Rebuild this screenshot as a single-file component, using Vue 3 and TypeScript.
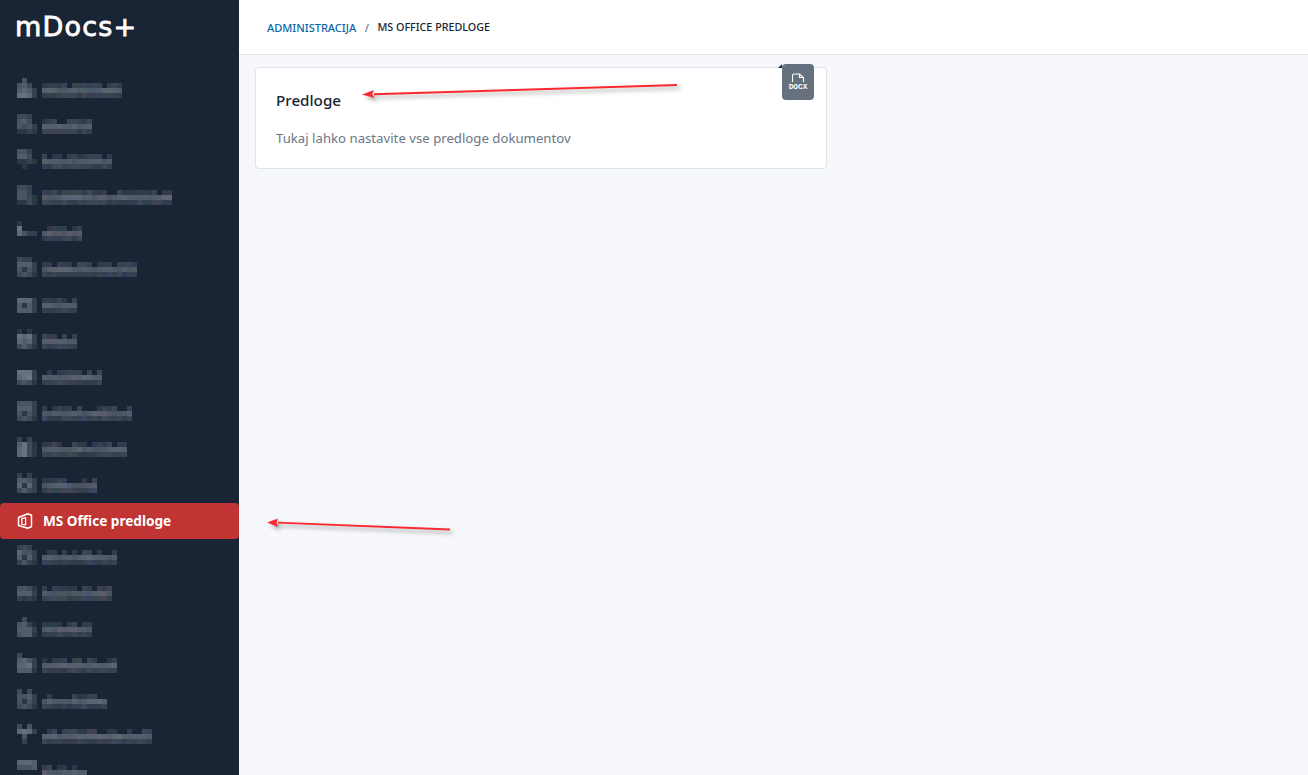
<script setup lang="ts">
interface Cell { x: number; y: number; fill: string }
interface Row { label?: string; cells?: Cell[] }

function rng(seed: number): () => number {
  let s = seed * 9301 + 49297;
  return () => {
    s = (s * 9301 + 49297) % 233280;
    return s / 233280;
  };
}

function shade(t: number, tint = 0.5): string {
  const r = Math.round(34 + t * 98 + (tint > 0.88 ? 8 : 0));
  const g = Math.round(45 + t * 96 + (tint > 0.76 && tint < 0.88 ? 5 : 0));
  const b = Math.round(60 + t * 92 + (tint < 0.12 ? 10 : 0));
  return `rgb(${r},${g},${b})`;
}

const icons: string[][] = [
  ['.4..', '453.', '5652', '7762'],
  ['332.', '453.', '4342', '1121'],
  ['442.', '553.', '1121', '.1..'],
  ['332.', '442.', '4431', '1131'],
  ['1...', '7...', '6422', '....'],
  ['322.', '5552', '4142', '3431'],
  ['....', '6662', '5152', '5552'],
  ['1.1.', '7672', '6562', '3531'],
  ['....', '7772', '6782', '3431'],
  ['4442', '5552', '4142', '3431'],
  ['2.2.', '5731', '6731', '6731'],
  ['2.2.', '5542', '6162', '3532'],
  [],
  ['232.', '6442', '5152', '2421'],
  ['....', '4431', '5552', '2121'],
  ['.3..', '4520', '5552', '4551'],
  ['3...', '5642', '6672', '5551'],
  ['3.3.', '4452', '4142', '3431'],
  ['3.4.', '6762', '.4..', '.2..'],
  ['6665', '4445', '....', '....'],
];

function mosaic(i: number, width: number): Cell[] {
  const rand = rng(i + 11);
  const cells: Cell[] = [];
  icons[i].forEach((line, row) => {
    [...line].forEach((ch, col) => {
      if (ch !== '.') cells.push({ x: col * 5, y: row * 5, fill: shade(Number(ch) / 10) });
    });
  });
  const n = Math.round(width / 5);
  let prev = 0.45;
  for (let col = 0; col < n; col++) {
    const x = 25 + col * 5;
    prev = prev * 0.5 + (0.33 + rand() * 0.3) * 0.5;
    const top = 0.1 + rand() * 0.16;
    if (rand() < 0.75) cells.push({ x, y: 5, fill: shade(top, rand()) });
    cells.push({ x, y: 10, fill: shade(prev, rand()) });
    cells.push({ x, y: 15, fill: shade(0.14 + rand() * 0.14, rand()) });
  }
  return cells;
}

const widths = [80, 50, 70, 130, 40, 95, 35, 35, 58, 90, 83, 55, 0, 75, 70, 50, 75, 65, 110, 45];
const rows: Row[] = widths.map((w, i) =>
  i === 12 ? { label: 'MS Office predloge' } : { cells: mosaic(i, w) }
);
</script>

<template>
  <div class="app">
    <aside class="sidebar">
      <div class="logo">mDocs+</div>
      <nav class="menu">
        <div v-for="(row, i) in rows" :key="i" class="item" :class="{ active: row.label }">
          <template v-if="row.label">
            <svg class="office" width="16" height="18" viewBox="0 0 16 18" fill="none" stroke="#fff" stroke-width="1.5" stroke-linejoin="round">
              <path d="M1.5 13.5V5.5L10.8 1.8l3.7 1.4v11.4l-3.7 1.6z" />
              <path d="M4.8 6.6 8.6 5.6v7.2l-3.8-.5z" stroke-width="1.3" />
            </svg>
            <span class="label">{{ row.label }}</span>
          </template>
          <svg v-else class="blur" width="200" height="20" viewBox="0 0 200 20" shape-rendering="crispEdges">
            <rect v-for="(c, k) in row.cells" :key="k" :x="c.x" :y="c.y" width="5" height="5" :fill="c.fill" />
          </svg>
        </div>
      </nav>
    </aside>

    <main class="main">
      <header class="topbar">
        <a class="crumb">ADMINISTRACIJA</a>
        <span class="sep">/</span>
        <span class="current">MS OFFICE PREDLOGE</span>
      </header>
      <section class="content">
        <article class="card">
          <h1 class="title">Predloge</h1>
          <p class="desc">Tukaj lahko nastavite vse predloge dokumentov</p>
          <span class="notch"></span>
          <div class="badge">
            <svg width="14" height="9" viewBox="0 0 14 9" fill="none" stroke="#fff" stroke-width="1.1">
              <path d="M1.5 9V2.5Q1.5 1 3 1H8.5l4 3.5V9" />
              <path d="M8.5 1v3.5h4" />
            </svg>
            <span class="badge-text">DOCX</span>
          </div>
        </article>
      </section>
    </main>

    <svg class="arrows" width="1308" height="775" viewBox="0 0 1308 775">
      <g class="arrow">
        <path d="M677 85 374 94.2" stroke="#fb2a30" stroke-width="1.9" fill="none" />
        <path d="M362 94.5 374 90 372 94.3 374.5 98z" fill="#fb2a30" />
      </g>
      <g class="arrow">
        <path d="M450 529.5 278 522.6" stroke="#fb2a30" stroke-width="1.9" fill="none" />
        <path d="M267 522.5 278 518.5 276.5 522.6 278 527z" fill="#fb2a30" />
      </g>
    </svg>
  </div>
</template>

<style>
html, body { margin: 0; height: 100%; overflow: hidden; background: #f6f8fb; }
</style>

<style scoped>
.app {
  position: relative;
  display: flex;
  width: 1308px;
  height: 775px;
  overflow: hidden;
  font-family: "Noto Sans", "Open Sans", sans-serif;
}
.sidebar {
  flex: 0 0 239px;
  height: 775px;
  overflow: hidden;
  background: #192534;
}
.logo {
  height: 71.6px;
  box-sizing: border-box;
  padding: 10px 0 0 15px;
  font-family: "DejaVu Sans", sans-serif;
  font-size: 27px;
  line-height: 34px;
  font-weight: 400;
  letter-spacing: 1.2px;
  -webkit-text-stroke: 0.8px #fff;
  color: #fff;
}
.item {
  height: 35.95px;
  display: flex;
  align-items: center;
  padding-left: 17px;
  box-sizing: border-box;
}
.blur { display: block; margin-top: -4px; }
.active {
  background: #c03434;
  border-radius: 4px;
  color: #fff;
}
.office { flex: none; }
.label {
  margin-left: 10px;
  font-size: 13.6px;
  font-weight: 700;
  white-space: nowrap;
}
.main {
  flex: 1;
  display: flex;
  flex-direction: column;
  background: #f6f8fb;
}
.topbar {
  height: 55px;
  box-sizing: border-box;
  display: flex;
  align-items: center;
  padding-left: 28px;
  background: #fff;
  border-bottom: 1px solid #dfe3ea;
  font-weight: 500;
  white-space: nowrap;
}
.crumb { color: #0a66a8; font-size: 11px; }
.sep { margin: 0 8.5px; color: #6b7785; font-size: 11px; }
.current { color: #182433; font-size: 10.75px; }
.content { padding: 12px 0 0 16px; }
.card {
  position: relative;
  width: 572px;
  height: 102px;
  box-sizing: border-box;
  padding: 21px 20px 0;
  background: #fff;
  border: 1px solid #dfe3ea;
  border-radius: 4px;
}
.title {
  margin: 0;
  font-size: 15.2px;
  line-height: 22px;
  font-weight: 500;
  color: #182433;
}
.desc {
  margin: 18px 0 0;
  font-size: 13.2px;
  line-height: 18px;
  color: #6b7785;
}
.notch {
  position: absolute;
  top: -4px;
  right: 44px;
  width: 0;
  height: 0;
  border-style: solid;
  border-width: 0 0 4px 4px;
  border-color: transparent transparent #14365e transparent;
}
.badge {
  position: absolute;
  top: -4px;
  right: 12px;
  width: 32px;
  height: 36px;
  box-sizing: border-box;
  padding-top: 9px;
  display: flex;
  flex-direction: column;
  align-items: center;
  background: #667180;
  border-radius: 4px;
}
.badge svg { display: block; }
.badge-text {
  margin-top: 1px;
  font-family: "Liberation Mono", monospace;
  font-size: 7.8px;
  line-height: 9px;
  font-weight: 700;
  letter-spacing: 0;
  color: #fff;
}
.arrows {
  position: absolute;
  left: 0;
  top: 0;
  pointer-events: none;
}
.arrow { filter: drop-shadow(3px 3px 2px rgba(0, 0, 0, 0.35)); }
</style>
